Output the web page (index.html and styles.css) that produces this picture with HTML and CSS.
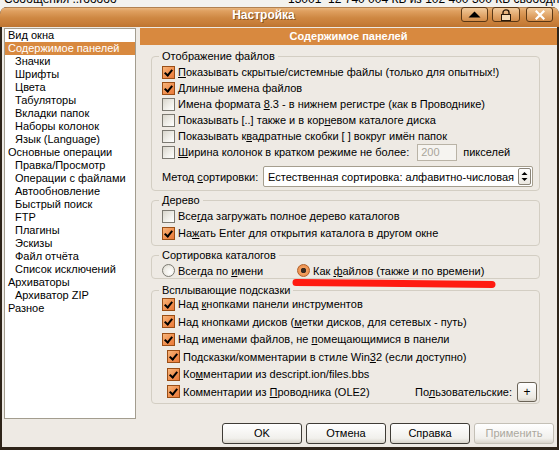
FILE: index.html
```html
<!DOCTYPE html>
<html lang="ru">
<head>
<meta charset="utf-8">
<title>Настройка</title>
<link rel="stylesheet" href="styles.css">
</head>
<body>
<div class="bgapp"><span class="bgl">Сообщения ..гооооо</span><span class="bgr">13001 &nbsp;12 740 004 КБ из 102 400 300 КБ свободно</span></div>
<div class="window">
  <div class="titlebar">
    <div class="title">Настройка</div>
    <div class="tbtn up"><svg width="13" height="7" viewBox="0 0 13 7"><polygon points="6.5,0.5 12.5,6.5 0.5,6.5" fill="#000"/></svg></div>
    <div class="tbtn lock"><svg width="12" height="12" viewBox="0 0 12 12"><path d="M3 6 V3.5 A3 2.6 0 0 1 9 3.5 V6" fill="none" stroke="#2a1a0a" stroke-width="1.4"/><rect x="1.5" y="5.5" width="9" height="6" fill="#f3d9b5" stroke="#2a1a0a"/></svg></div>
    <div class="tbtn close"><svg width="10" height="10" viewBox="0 0 10 10"><path d="M1.5 1.5 L8.5 8.5 M8.5 1.5 L1.5 8.5" stroke="#fff" stroke-width="2.2" stroke-linecap="square"/></svg></div>
  </div>
  <div class="client">
    <div class="main">
      <ul class="tree">
        <li>Вид окна</li>
        <li class="sel">Содержимое панелей</li>
        <li class="ch">Значки</li>
        <li class="ch">Шрифты</li>
        <li class="ch">Цвета</li>
        <li class="ch">Табуляторы</li>
        <li class="ch">Вкладки папок</li>
        <li class="ch">Наборы колонок</li>
        <li class="ch">Язык (Language)</li>
        <li>Основные операции</li>
        <li class="ch">Правка/Просмотр</li>
        <li class="ch">Операции с файлами</li>
        <li class="ch">Автообновление</li>
        <li class="ch">Быстрый поиск</li>
        <li class="ch">FTP</li>
        <li class="ch">Плагины</li>
        <li class="ch">Эскизы</li>
        <li class="ch">Файл отчёта</li>
        <li class="ch">Список исключений</li>
        <li>Архиваторы</li>
        <li class="ch">Архиватор ZIP</li>
        <li>Разное</li>
      </ul>
      <div class="panel">
        <div class="panel-head">Содержимое панелей</div>
        <div class="panel-body">
          <fieldset class="g1">
            <legend>Отображение файлов</legend>
            <div class="row"><span class="cb on"></span><span><u>П</u>оказывать скрытые/системные файлы (только для опытных!)</span></div>
            <div class="row"><span class="cb on"></span><span><u>Д</u>линные имена файлов</span></div>
            <div class="row"><span class="cb"></span><span>Имена формата <u>8</u>.3 - в нижнем регистре (как в Проводнике)</span></div>
            <div class="row"><span class="cb"></span><span>Показывать [..] также и в кор<u>н</u>евом каталоге диска</span></div>
            <div class="row"><span class="cb"></span><span>Показывать к<u>в</u>адратные скобки [ ] вокруг имён папок</span></div>
            <div class="row"><span class="cb"></span><span><u>Ш</u>ирина колонок в кратком режиме не более:</span><span class="num">200</span><span>пикселей</span></div>
            <div class="sortrow"><span class="sortlabel">Метод <u>с</u>ортировки:</span><div class="select"><span>Естественная сортировка: алфавитно-числовая</span><span class="spin"><svg width="7" height="11" viewBox="0 0 7 11"><polygon points="3.5,1 6.5,4 0.5,4" fill="#000"/><polygon points="0.5,7 6.5,7 3.5,10" fill="#000"/></svg></span></div></div>
          </fieldset>
          <fieldset class="g2">
            <legend>Дерево</legend>
            <div class="row"><span class="cb"></span><span>Все<u>г</u>да загружать полное дерево каталогов</span></div>
            <div class="row"><span class="cb on"></span><span>На<u>ж</u>ать Enter для открытия каталога в другом окне</span></div>
          </fieldset>
          <fieldset class="g3">
            <legend>Сортировка каталогов</legend>
            <div class="rrow"><span class="r1"><span class="rd"></span><span>Всегда по <u>и</u>мени</span></span><span class="r2"><span class="rd on"></span><span>Как <u>ф</u>айлов (также и по времени)</span></span></div>
          </fieldset>
          <fieldset class="g4">
            <legend>Всплывающие подсказки</legend>
            <div class="tips">
              <div class="row"><span class="cb on"></span><span>Над <u>к</u>нопками панели инструментов</span></div>
              <div class="row"><span class="cb on"></span><span>Над кнопками дисков (<u>м</u>етки дисков, для сетевых - путь)</span></div>
              <div class="row"><span class="cb on"></span><span>Над именами файлов, не <u>п</u>омещающимися в панели</span></div>
              <div class="row ind"><span class="cb on"></span><span>Подсказки/комментарии в стиле Win<u>3</u>2 (если доступно)</span></div>
              <div class="row ind"><span class="cb on"></span><span>Ко<u>м</u>ментарии из descript.ion/files.bbs</span></div>
              <div class="row ind last"><span class="cb on"></span><span>Комментарии из <u>П</u>роводника (OLE2)</span><span class="user">По<u>л</u>ьзовательские:</span><span class="plus">+</span></div>
            </div>
          </fieldset>
        </div>
      </div>
    </div>
    <div class="buttons">
      <div class="btn">OK</div>
      <div class="btn">Отмена</div>
      <div class="btn">Справка</div>
      <div class="btn dis">Применить</div>
    </div>
  </div>
</div>
<svg class="redline" width="559" height="450" viewBox="0 0 559 450"><path d="M296 282.5 C 360 283, 430 284, 492 284.5" fill="none" stroke="#FF1A10" stroke-width="7" stroke-linecap="round"/></svg>
</body>
</html>
```
FILE: styles.css
```css
* { box-sizing: border-box; }
body {
  margin: 0;
  width: 559px;
  height: 450px;
  overflow: hidden;
  position: relative;
  background: #F3F2EE;
  font-family: "Liberation Sans", Arial, sans-serif;
  font-size: 11px;
  color: #000;
}
u { text-decoration: underline; text-underline-offset: 1px; }

.bgapp {
  height: 7px;
  overflow: hidden;
  display: flex;
  padding: 0 0 0 4px;
}
.bgapp span {
  display: block;
  font-size: 12px;
  line-height: 13px;
  margin-top: -7px;
  white-space: nowrap;
}
.bgapp .bgl { width: 284px; flex: none; overflow: hidden; }

.window {
  height: 443px;
  background: #2E2419;
  border-radius: 7px 7px 0 0;
  padding: 0 2px 3px;
  display: flex;
  flex-direction: column;
}
.titlebar {
  height: 20px;
  margin: 0 -2px;
  border-radius: 7px 7px 0 0;
  background: linear-gradient(to bottom, #7A4C22 0, #E9B67E 1px, #DFA060 4px, #CE8742 11px, #C87E39 16px, #BD7431 20px);
  display: flex;
  align-items: flex-start;
  padding: 0 6px 0 66px;
}
.title {
  flex: 1;
  text-align: center;
  color: #fff;
  font-weight: bold;
  font-size: 12px;
  line-height: 16px;
  text-shadow: 1px 1px 0 #8A5422;
}
.tbtn {
  width: 27px;
  height: 15px;
  border: 1px solid #5A3816;
  border-radius: 3px;
  background: linear-gradient(to bottom, #F2CB9C, #E0A468 60%, #D28C4A);
  display: flex;
  align-items: center;
  justify-content: center;
}
.tbtn.lock { width: 28px; margin-left: 4px; }
.tbtn.close { margin-left: 6px; }

.client {
  flex: 1;
  background: #EEEAE4;
  display: flex;
  flex-direction: column;
  padding: 1px 0 0 2px;
}
.main { display: flex; height: 391px; }
.tree {
  width: 132px;
  height: 391px;
  border: 1px solid #A39D8F;
  background: #fff;
  margin: 0;
  padding: 0;
  list-style: none;
  flex: none;
}
.tree li {
  height: 13px;
  line-height: 13px;
  padding-left: 3px;
  white-space: nowrap;
}
.tree li.ch { padding-left: 10px; }
.tree li.sel { background: #D8893F; color: #fff; }

.panel { margin-left: 4px; width: 417px; flex: none; }
.panel-head {
  height: 17px;
  background: #D8893F;
  color: #fff;
  font-weight: bold;
  text-align: center;
  line-height: 17px;
}
.panel-body { padding: 5px 17px 0 11px; }

fieldset {
  margin: 0;
  padding: 1px 2px 3px 10px;
  border: 1px solid #D3CEC3;
  border-radius: 4px;
  min-width: 0;
}
legend {
  padding: 0 3px;
  margin-left: -3px;
  line-height: 13px;
}
.g2, .g3 { margin-top: 3px; }
.g2 { padding-bottom: 4px; }
.g3 { padding-bottom: 0; }
.g4 { margin-top: 5px; padding-top: 0; padding-bottom: 2px; }

.row {
  display: flex;
  align-items: center;
  height: 16px;
  white-space: nowrap;
}
.g2 .row + .row { margin-top: 1px; }
.tips { margin-top: -1.5px; }
.tips .row { height: 17.5px; }
.row.ind { padding-left: 5px; }
.user { margin-left: auto; }

.cb {
  width: 13px;
  height: 13px;
  flex: none;
  margin-right: 3px;
  border: 1px solid #7C7A72;
  background: linear-gradient(135deg, #D9D6CC 0%, #F2F1EC 60%, #FFFFFF 100%);
  position: relative;
}
.cb.on {
  border-color: #9A4E16;
  background: linear-gradient(135deg, #F7B57A 0%, #F19454 50%, #E9793A 100%);
}
.cb.on::after {
  content: "";
  position: absolute;
  left: 3px;
  top: 1px;
  width: 3px;
  height: 6px;
  border: solid #000;
  border-width: 0 2px 2px 0;
  transform: rotate(40deg);
}

.num {
  width: 40px;
  height: 17px;
  border: 1px solid #B9B3A6;
  background: #F6F4F0;
  color: #A9A59B;
  padding-left: 3px;
  line-height: 15px;
  margin: 0 6px 0 8px;
}

.sortrow {
  display: flex;
  align-items: center;
  height: 21px;
  margin-top: 6px;
  white-space: nowrap;
}
.sortlabel { width: 101px; flex: none; }
.select {
  width: 270px;
  height: 21px;
  border: 1px solid #A59E8E;
  border-radius: 2px;
  background: #fff;
  display: flex;
  align-items: center;
  justify-content: space-between;
  padding-left: 4px;
}
.spin {
  width: 13px;
  height: 17px;
  margin-right: 1px;
  border: 1px solid #8A8478;
  border-radius: 2px;
  background: linear-gradient(to bottom, #FFFFFF, #EAE7E0);
  display: flex;
  align-items: center;
  justify-content: center;
}

.rrow {
  display: flex;
  align-items: center;
  height: 15px;
  white-space: nowrap;
}
.r1, .r2 { display: flex; align-items: center; }
.r1 { width: 135px; flex: none; }
.rd {
  width: 13px;
  height: 13px;
  flex: none;
  margin-right: 3px;
  border-radius: 50%;
  border: 1px solid #7C7A72;
  background: radial-gradient(circle at 65% 65%, #FFFFFF 0%, #F0EEE8 50%, #D6D3C9 100%);
}
.rd.on {
  border-color: #B0612A;
  background: radial-gradient(circle at 50% 50%, #3A2A20 0, #3A2A20 2.5px, #F4A060 3px, #E6843F 100%);
}

.plus {
  width: 20px;
  height: 20px;
  flex: none;
  margin-left: 5px;
  border: 1px solid #6A6356;
  border-radius: 3px;
  background: linear-gradient(to bottom, #FFFFFF, #ECE9E2 80%, #D8D3C9);
  display: flex;
  align-items: center;
  justify-content: center;
  font-size: 12px;
  line-height: 1;
}

.buttons {
  display: flex;
  justify-content: flex-end;
  gap: 4px;
  margin-top: 4px;
  padding-right: 3px;
}
.btn {
  width: 80px;
  height: 21px;
  border: 1px solid #3F3C36;
  border-radius: 3px;
  background: linear-gradient(to bottom, #FFFFFF, #F1F0EC 75%, #D9D4CA);
  text-align: center;
  line-height: 19px;
}
.btn.dis { color: #ABA89E; border-color: #C4C0B6; }

.redline {
  position: absolute;
  left: 0;
  top: 0;
  pointer-events: none;
}
```
